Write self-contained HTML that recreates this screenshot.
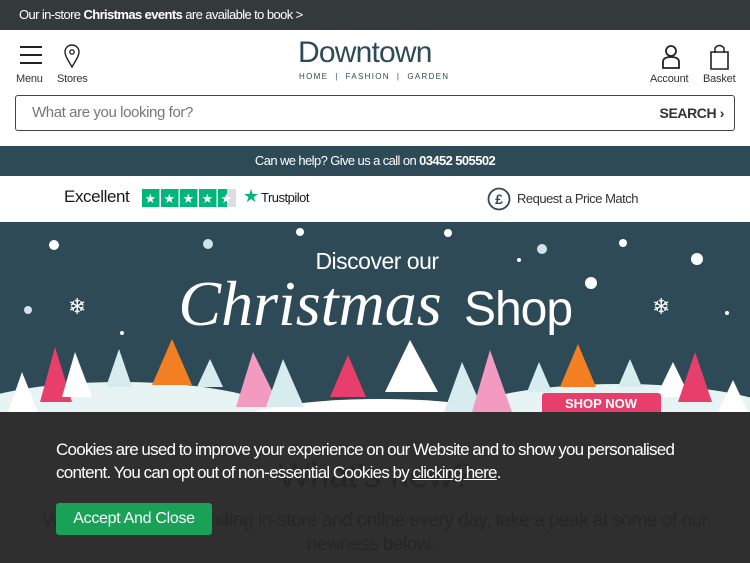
<!DOCTYPE html>
<html><head><meta charset="utf-8"><style>
*{margin:0;padding:0;box-sizing:border-box}
body{width:750px;height:563px;overflow:hidden;font-family:"Liberation Sans",sans-serif;background:#fff;position:relative}
.top{height:30px;background:#343a3c;color:#fff;font-size:13px;line-height:30px;padding-left:19px;letter-spacing:-.6px}
.hdr{position:relative;height:65px}
.lbl{position:absolute;font-size:11px;color:#333;top:43px;letter-spacing:-.2px}
.logo{position:absolute;left:298px;top:6px;font-size:30px;color:#2d4a56;letter-spacing:-.8px}
.sub{position:absolute;left:299px;top:72px;font-size:8px;letter-spacing:1.3px;color:#2d4a56}
.search{position:absolute;left:15px;top:95px;width:720px;height:36px;border:1px solid #444;border-radius:3px;font-size:15px;line-height:34px;padding-left:16px;color:#777;letter-spacing:-.4px}
.search b{position:absolute;right:10px;color:#333;font-size:14px}
.help{position:absolute;top:146px;left:0;width:750px;height:30px;background:#2d4a56;color:#fff;font-size:13px;text-align:center;line-height:30px;letter-spacing:-.6px}
.tp{position:absolute;top:176px;height:46px;width:750px}
.ban{position:absolute;top:222px;left:0;width:750px;height:190px;background:#2d4a56;overflow:hidden}
.ov{position:absolute;top:412px;left:0;width:750px;height:151px;background:#2f2f2f}
</style></head><body>
<div class="top">Our in-store <b>Christmas events</b> are available to book &gt;</div>
<div class="hdr">
<svg style="position:absolute;left:19px;top:14px" width="24" height="22"><path d="M1 3H23M1 11H23M1 19H23" stroke="#222" stroke-width="2"/></svg>
<svg style="position:absolute;left:63px;top:13px" width="18" height="26"><path d="M9 24C5 17 2 13 2 9A7 7 0 0 1 16 9C16 13 13 17 9 24Z" fill="none" stroke="#222" stroke-width="1.4"/><circle cx="9" cy="9" r="2.2" fill="none" stroke="#222" stroke-width="1.3"/></svg>
<div class="lbl" style="left:16px">Menu</div><div class="lbl" style="left:57px">Stores</div>
<div class="logo">Downtown</div>
<svg style="position:absolute;left:660px;top:14px" width="22" height="26"><circle cx="11" cy="7" r="5" fill="none" stroke="#222" stroke-width="1.8"/><path d="M3 24V18Q3 13 11 13Q19 13 19 18V24Z" fill="none" stroke="#222" stroke-width="1.8"/></svg>
<svg style="position:absolute;left:709px;top:13px" width="22" height="28"><path d="M2 9H19V26H2Z" fill="none" stroke="#222" stroke-width="1.6"/><path d="M6 10V5Q10.5 0 15 5V10" fill="none" stroke="#222" stroke-width="1.5"/></svg>
<div class="lbl" style="left:650px">Account</div><div class="lbl" style="left:703px">Basket</div>
</div>
<div class="sub">HOME &nbsp;| &nbsp;FASHION &nbsp;| &nbsp;GARDEN</div>
<div class="search">What are you looking for?<b>SEARCH ›</b></div>
<div class="help">Can we help? Give us a call on <b>03452 505502</b></div>
<div class="tp">
<span style="position:absolute;left:64px;top:11px;font-size:17px;color:#191919;letter-spacing:-.4px">Excellent</span>
<svg style="position:absolute;left:142px;top:13px" width="95" height="18"><g fill="#00b67a"><rect x="0" width="17.5" height="18"/><rect x="19" width="17.5" height="18"/><rect x="38" width="17.5" height="18"/><rect x="57" width="17.5" height="18"/><rect x="76" width="9" height="18"/></g><rect x="85" width="9" height="18" fill="#dcdce6"/><g fill="#fff" font-size="13" font-family="DejaVu Sans"><text x="2.5" y="14">★</text><text x="21.5" y="14">★</text><text x="40.5" y="14">★</text><text x="59.5" y="14">★</text><text x="78.5" y="14">★</text></g></svg>
<span style="position:absolute;left:243px;top:10px;font-size:18px;color:#00b67a;font-family:'DejaVu Sans'">★</span>
<span style="position:absolute;left:261px;top:14px;font-size:13px;color:#191919;letter-spacing:-.5px">Trustpilot</span>
<svg style="position:absolute;left:487px;top:11px" width="24" height="24"><circle cx="12" cy="12" r="10.5" fill="none" stroke="#2d4a56" stroke-width="1.8"/><text x="12" y="17" text-anchor="middle" font-size="14" font-weight="bold" fill="#2d4a56">£</text></svg>
<span style="position:absolute;left:517px;top:15px;font-size:13px;color:#333;letter-spacing:-.5px">Request a Price Match</span>
</div>
<div class="ban">
<svg width="750" height="190">
<g fill="#fff"><circle cx="54" cy="23" r="5"/><circle cx="300" cy="10" r="4"/><circle cx="448" cy="11" r="4"/><circle cx="623" cy="21" r="4"/><circle cx="697" cy="37" r="6"/><circle cx="591" cy="61" r="6"/><circle cx="519" cy="38" r="2"/><circle cx="122" cy="111" r="2"/><circle cx="727" cy="91" r="2"/><circle cx="28" cy="88" r="4" fill="#cfe4e8"/><circle cx="208" cy="22" r="5" fill="#cfe4e8"/><circle cx="542" cy="27" r="5" fill="#cfe4e8"/></g>
<text x="377" y="47" text-anchor="middle" font-size="23" fill="#fff" letter-spacing="-0.5">Discover our</text>
<text x="310" y="103" text-anchor="middle" font-size="64" font-style="italic" font-family="Liberation Serif" fill="#fff">Christmas</text>
<text x="518" y="103" text-anchor="middle" font-size="48" fill="#fff" letter-spacing="-1">Shop</text>
<g fill="#fff" font-size="22" font-family="DejaVu Sans"><text x="68" y="92">❄</text><text x="652" y="92">❄</text></g>
<ellipse cx="120" cy="200" rx="170" ry="40" fill="#e8f4f4"/><ellipse cx="380" cy="205" rx="150" ry="28" fill="#fff"/><ellipse cx="620" cy="200" rx="170" ry="38" fill="#e8f4f4"/>
<g>
<polygon points="8,190 22,150 38,190" fill="#fff"/><polygon points="40,180 55,125 72,180" fill="#e83e6c"/><polygon points="62,175 75,130 92,175" fill="#fff"/><polygon points="106,165 119,127 132,165" fill="#d6ecef"/><polygon points="152,163 172,117 192,163" fill="#f47f22"/><polygon points="197,165 210,137 223,165" fill="#d6ecef"/><polygon points="236,185 253,130 280,185" fill="#f39ac0"/><polygon points="266,185 283,137 304,185" fill="#d6ecef"/><polygon points="330,175 348,133 366,175" fill="#e83e6c"/><polygon points="385,170 410,118 438,170" fill="#fff"/><polygon points="444,190 462,140 484,190" fill="#d6ecef"/><polygon points="472,190 490,128 512,190" fill="#f39ac0"/><polygon points="527,170 539,140 552,170" fill="#d6ecef"/><polygon points="560,165 578,122 596,165" fill="#f47f22"/><polygon points="618,165 630,137 642,165" fill="#d6ecef"/><polygon points="656,175 673,140 690,175" fill="#fff"/><polygon points="678,180 695,130 712,180" fill="#e83e6c"/><polygon points="718,190 733,158 748,190" fill="#fff"/>
</g>
<rect x="542" y="171" width="119" height="22" rx="3" fill="#e83e6c"/>
<text x="601" y="186" text-anchor="middle" font-size="13" font-weight="bold" fill="#fff">SHOP NOW</text>
</svg>
</div>
<div class="ov">
<div style="position:absolute;left:0;width:750px;top:45px;text-align:center;font-size:34px;color:#262626">What's new?</div>
<div style="position:absolute;left:20px;width:710px;top:97px;text-align:center;font-size:19px;color:#262626;line-height:24px;letter-spacing:-.5px">With new products landing in-store and online every day, take a peak at some of our newness below...</div>
<div style="position:absolute;left:56px;top:26px;width:660px;font-size:17px;line-height:23px;color:#fff;letter-spacing:-.75px;word-spacing:-.5px">Cookies are used to improve your experience on our Website and to show you personalised content. You can opt out of non-essential Cookies by <u>clicking here</u>.</div>
<div style="position:absolute;left:56px;top:91px;width:156px;height:32px;background:#18a157;border-radius:3px;color:#fff;font-size:16px;line-height:32px;text-align:center;letter-spacing:-.3px">Accept And Close</div>
</div>
</body></html>
